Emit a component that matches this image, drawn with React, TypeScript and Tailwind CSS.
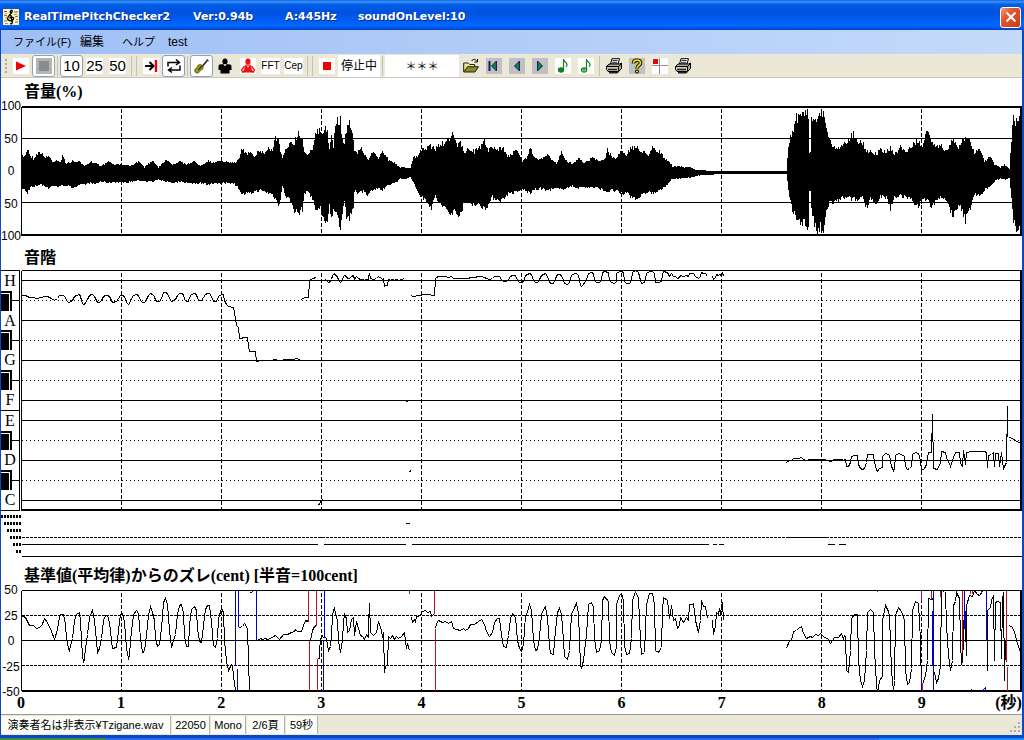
import type { ReactNode } from "react";

type Point = [number, number];

const points = (text: string): Point[] =>
  text.trim().split(/\s+/).map((pair) => pair.split(",").map(Number) as Point);

const linePath = (pts: Point[]) => "M" + pts.map(([x, y]) => `${x} ${y}`).join("L");

/* Volume envelope: time position, upper edge, lower edge. */
const ENVELOPE = `21,154,186 24,155,188 27,146,192 30,154,185 33,157,186 36,153,184 40,150,183 44,156,184 48,154,187 52,160,184
57,158,185 60,161,184 62,155,184 66,162,184 72,160,186 78,160,184 84,165,183 90,161,181 94,160,183 100,165,180 108,160,181 114,163,180
122,163,181 130,165,180 138,160,179 144,166,179 152,159,180 158,166,178 166,158,180 172,163,181 180,160,180 186,163,181 194,160,182
200,164,181 208,159,183 214,162,181 220,159,182 228,161,181 234,162,182 238,157,186 242,147,194 246,152,192 250,149,193 254,154,190
260,149,189 264,152,190 268,146,192 272,149,193 275,135,198 278,137,203 280,150,198 282,157,184 285,149,194 290,139,200 294,140,209
298,130,213 302,137,208 304,150,192 308,152,190 312,145,198 315,133,208 318,129,210 320,128,205 322,135,215 325,124,224 327,128,225
329,148,204 331,136,220 333,145,207 335,120,210 338,118,220 340,116,226 342,138,214 344,140,198 346,128,215 349,115,218 351,126,215
353,140,206 354,148,190 357,152,191 360,144,190 364,154,190 368,157,194 372,151,188 378,157,187 382,149,189 388,158,184 392,160,182
396,163,180 400,166,177 406,167,177 410,167,175 413,156,181 415,155,186 417,155,189 421,149,196 427,145,200 431,144,207 435,147,195
440,142,204 446,140,209 450,139,214 453,130,210 457,142,214 460,142,212 464,150,203 468,147,201 474,150,203 480,145,205 484,138,207
488,148,204 492,144,196 496,148,198 502,145,199 508,155,192 512,153,192 516,146,191 518,150,190 522,160,188 526,156,190 530,147,192
534,157,188 540,158,187 546,153,189 550,156,188 556,162,187 561,151,188 566,160,186 572,162,185 578,156,186 584,162,186 592,156,186
598,160,187 604,158,189 607,148,190 612,155,189 616,157,190 621,148,193 626,153,191 630,147,195 637,145,197 641,150,195 648,153,190
652,144,192 656,149,191 660,150,189 664,158,186 668,160,181 672,165,177 678,165,177 684,166,176 690,166,176 696,169,174 702,169,173
710,170,173 722,170,172 786,170,172 787,156,180 789,138,198 792,130,210 795,114,216 798,116,220 801,112,222 804,109,222 806,107,226
808,114,228 809,150,189 810,150,189 811,116,210 814,118,224 817,112,235 820,110,226 822,108,234 824,114,228 826,124,210 829,138,201
834,146,202 842,145,197 848,137,197 853,131,198 858,139,199 862,140,195 866,150,207 870,150,196 876,152,205 880,148,196 886,150,197
890,146,208 894,153,196 900,145,194 906,150,197 912,143,198 918,139,208 922,144,198 927,129,198 931,140,208 936,144,198 941,142,196
946,150,201 953,135,215 958,146,206 961,139,208 965,137,220 970,138,206 974,152,192 980,147,196 984,160,188 990,155,185 994,163,180
1000,166,176 1004,163,178 1009,168,176 1011,138,195 1013,116,220 1016,118,228 1021,118,225`;

function waveformPath(): string {
  const knots = ENVELOPE.trim().split(/\s+/).map((k) => k.split(",").map(Number));
  let seed = 7;
  const random = () => {
    seed = (seed * 16807) % 2147483647;
    return seed / 2147483647;
  };
  let d = "";
  let k = 0;
  for (let x = 21; x <= 1021; x++) {
    while (k < knots.length - 2 && knots[k + 1][0] < x) k++;
    const [x0, t0, b0] = knots[k];
    const [x1, t1, b1] = knots[k + 1];
    const f = (x - x0) / (x1 - x0);
    const up = (171 - (t0 + (t1 - t0) * f)) * (1.06 - random() * 0.2);
    const down = (b0 + (b1 - b0) * f - 171) * (1.05 - random() * 0.17);
    d += `M${x} ${Math.max(107, Math.round(171 - up))}V${Math.min(235, Math.round(171 + down) + 1)}`;
  }
  return d;
}

const CENT = {
  a: points(`21,615 25,617 29,625 33,625 36,628 41,626 44,618 47,622 51,631 54,639 57,629 59,616 60,614 63,614 65,624 66,638 68,648 69,651
70,645 72,638 74,620 76,614 79,612 80,620 81,640 82,655 83,662 84,658 85,648 87,634 89,617 91,612 92,610 93,615 94,620 96,640 97,652
99,648 101,638 103,620 105,615 107,615 109,622 111,640 112,648 116,647 118,630 120,614 122,613 124,622 126,648 128,658 129,655 130,640
133,614 136,610 138,613 140,638 142,652 144,651 146,634 148,615 150,606 152,612 154,620 155,638 157,646 159,644 161,628 163,602 165,598
167,604 169,630 171,647 173,640 175,634 177,614 179,605 181,604 183,612 184,636 186,646 188,646 189,625 191,609 194,606 196,610 197,628
199,641 201,642 203,625 205,609 207,605 209,605 211,622 213,645 215,647 217,638 218,618 221,608 223,612 224,640 226,661 228,670 231,664
232,665 233,676 235,690`),
  b: points("239,627 242,626 244,623 247,628 248,660 249,690"),
  c: points("257,640 260,638 262,639 265,638 267,639 270,638 275,635 279,639 283,634 287,634 291,632 294,631 295,629 297,631 301,631 303,625 305,620 307,621 308,618 309,619"),
  d: points("310,640 312,630 314,626 316,625"),
  e: points("318,659 319,657 319,650 320,640 321,635 322,635 323,638"),
  f: points(`325,637 326,638 327,645 328,650 330,646 331,636 332,614 334,607 335,614 337,620 338,640 340,652 342,640 343,622 344,614 346,618
347,632 349,630 351,619 353,617 354,635 356,621 358,628 360,635 362,636 364,639 366,634 368,637 368,625 369,603 370,632 373,635 376,632
378,621 381,630 382,637 383,632 384,672 385,666 387,664 388,636 390,638 392,635 394,639 396,636 398,638 401,636 404,632 406,648 407,643 409,650`),
  g: points("411,617 412,622 414,619 415,622 416,616 418,616 420,614 422,611 425,610 427,612 430,611 431,616 434,613"),
  h: points(`435,628 436,623 438,620 442,622 445,621 448,623 451,621 453,628 456,629 460,630 463,628 465,630 468,628 470,624 474,624 478,621 481,619
484,624 486,631 489,636 492,632 494,622 497,618 499,618 501,635 503,646 506,647 508,635 510,618 512,613 515,617 517,640 519,648 521,651
523,644 525,615 527,612 529,604 531,610 533,640 535,650 537,649 539,636 541,614 543,609 545,606 547,618 549,645 550,653 553,654 555,630
557,612 559,608 561,614 563,640 564,656 567,659 569,650 571,614 574,607 576,603 578,613 579,640 580,664 581,668 583,660 586,634 588,604
591,602 593,607 594,638 596,652 599,650 601,640 602,600 604,596 608,601 609,640 611,652 614,655 616,646 616,604 619,595 621,593 623,600
624,645 626,654 629,653 631,638 632,600 635,591 638,598 640,640 641,654 644,652 646,604 649,593 652,593 654,604 655,650 658,652 661,647
662,610 663,597 667,600 669,618 671,605 673,620 675,618 677,628 679,625 680,617 683,622 686,617 688,620 689,604 692,604 693,603 695,620
698,632 700,620 701,600 703,606 705,606 707,618`),
  i: points("712,620 713,634 715,625 716,612 718,614 719,608 720,614 721,605 722,602 723,620"),
  j: points(`786,648 789,640 791,640 793,631 796,630 798,628 801,626 803,633 806,638 810,636 812,637 815,634 818,635 820,633 824,637 827,638 830,643
834,637 838,637 841,633 843,639 844,635 845,636 846,670 848,672 850,650 851,618 854,614 857,614 858,660 860,680 862,686 864,680 866,650
867,612 870,609 873,612 874,650 876,684 877,693 879,680 882,676 882,620 885,605 888,611 889,616 891,670 893,691 894,680 895,615 898,607
901,611 904,620 905,670 907,684 909,682 911,668 912,610 915,601 918,603 920,640 921,688`),
  k: points("922,684 925,675 927,660 928,598 931,599 933,598"),
  l: points("934,672 936,682 938,678 940,665 941,591"),
  m: points("945,592 946,625 948,655 950,670 952,660 953,605 955,601 956,592 959,598 960,640 961,664 962,660 963,640 964,600 966,655 966,605 969,595 972,596 974,590 977,594 979,595 982,591"),
  n: points("987,670 987,610 990,607 991,600 993,595 994,660 995,602 997,601 1000,602 1001,658 1002,600 1003,592 1004,680 1005,640 1006,662"),
  o: points("1009,625 1012,627 1014,632 1017,643 1021,655"),
};

/* One semitone is 100 cents: 100 px in the deviation chart, 20 px on the scale. */
const onScale = (pts: Point[], row: number): Point[] =>
  pts.map(([x, y]) => [x, Math.round(row + (y - 640) / 5)]);

const PITCH: Point[][] = [
  onScale(CENT.a.filter(([x]) => x < 230), 300),
  points("228,306 233,307 235,318 236,325 238,327 239,338 241,338 243,337 247,337 248,346 249,351 255,351 256,361 258,361"),
  points("272,359 276,359"),
  points("282,359 294,359 295,358 300,359"),
  points("301,299 304,297 308,297 309,280 312,278 316,277"),
  points("317,504 319,504 320,501 322,499"),
  onScale(CENT.f.filter(([x]) => x < 405), 280),
  points("405,400 408,402"),
  points("409,471 411,470"),
  [...onScale(CENT.g, 300), ...onScale(CENT.h, 280)],
  onScale(CENT.i, 280),
  [...onScale(CENT.j, 460), ...points(`924,468 926,464 928,452 931,452 932,414 933,468 937,469 940,462 941,451 945,452 946,457 950,466 953,457 955,452
959,452 960,463 962,466 963,450 965,464 966,452 972,451 984,451 986,452 987,467 988,455 991,454 993,452 994,466 995,453 998,453 999,466
1001,452 1003,468 1006,462 1007,406 1007,436`)],
  points("1009,437 1012,438 1016,441 1021,443"),
];

const SECONDS = [1, 2, 3, 4, 5, 6, 7, 8, 9];

function Grid({ top, bottom }: { top: number; bottom: number }) {
  return (
    <path
      d={SECONDS.map((s) => `M${21 + s * 100} ${top}V${bottom}`).join("")}
      strokeDasharray="4 2"
    />
  );
}

function Plot({ top, height, label, children }: { top: number; height: string; label: string; children: ReactNode }) {
  const size = Number(height.replace(/\D/g, ""));
  return (
    <svg
      role="img"
      aria-label={label}
      viewBox={`21 ${top} 1001 ${size}`}
      preserveAspectRatio="none"
      shapeRendering="crispEdges"
      className={`block w-full min-w-0 flex-1 ${height}`}
    >
      <g transform="translate(0.5 0.5)" fill="none" stroke="#000">
        {children}
      </g>
    </svg>
  );
}

function Axis({ values }: { values: string[] }) {
  return (
    <div className="-my-2 flex w-5 shrink-0 flex-col items-center justify-between text-[12px] leading-4">
      {values.map((v, i) => (
        <span key={i}>{v}</span>
      ))}
    </div>
  );
}

function Heading({ children }: { children: ReactNode }) {
  return (
    <h2 className="flex h-7 items-center pl-[23px] font-['Liberation_Serif','Noto_Sans_CJK_JP',serif] text-[16px] leading-6 font-bold whitespace-pre">
      {children}
    </h2>
  );
}

function Keyboard() {
  const rows = ["H", "", "A", "", "G", "", "F", "E", "", "D", "", "C"];
  return (
    <div className="flex h-[241px] w-5 shrink-0 pr-px">
      <div className="flex w-full flex-col border-y border-r border-black">
        {rows.map((name, i) =>
          name ? (
            <div
              key={i}
              className={`flex min-h-0 flex-1 items-center justify-center font-['Liberation_Serif',serif] text-[16px] leading-4 ${name === "E" ? "border-t border-black" : ""}`}
            >
              {name}
            </div>
          ) : (
            <div key={i} className="flex min-h-0 flex-1 items-center">
              <span className="flex h-full w-[11px] border-t-2 border-r-2 border-black pt-px">
                <span className="w-2 bg-black" />
              </span>
              <span className="h-px flex-1 bg-black" />
            </div>
          ),
        )}
      </div>
    </div>
  );
}

function LevelMarks() {
  return (
    <div className="flex w-5 shrink-0 flex-col items-end gap-1 pt-1" aria-hidden="true">
      {[7, 6, 5, 4, 3, 2].map((n) => (
        <div key={n} className="flex gap-px">
          {Array.from({ length: n }, (_, i) => (
            <span key={i} className="h-[3px] w-[2px] bg-black" />
          ))}
        </div>
      ))}
    </div>
  );
}

function Tool({ label, on, children }: { label: string; on?: boolean; children: ReactNode }) {
  return (
    <button
      type="button"
      aria-label={label}
      aria-pressed={on ? true : undefined}
      className={`flex h-[22px] w-[23px] shrink-0 items-center justify-center rounded-[3px] ${on ? "border border-[#8ba3bd] bg-white" : ""}`}
    >
      {children}
    </button>
  );
}

function Icon({ bg, children }: { bg?: string; children: ReactNode }) {
  return (
    <svg viewBox="0 0 16 16" className="size-4" aria-hidden="true">
      {bg && <rect width="16" height="16" fill={bg} />}
      {children}
    </svg>
  );
}

function Word({ children }: { children: ReactNode }) {
  return (
    <span className="bg-white text-[15px] leading-4">{children}</span>
  );
}

function SmallWord({ children }: { children: ReactNode }) {
  return (
    <span className="bg-white text-[10px] leading-4">{children}</span>
  );
}

const Separator = () => <span className="mx-[2px] h-5 w-px shrink-0 bg-[#c5c2b2]" />;

const Printer = () => (
  <Icon>
    <path d="M4.5 6L6 .7h7.5L12 6z" fill="#fff" stroke="#000" />
    <path d="M6.5 2.5h5M6 4.3h5" stroke="#000" strokeWidth=".8" />
    <path d="M.5 8.5L3 6h10.5l2-1v5.5l-3 3z" fill="#a8a8a0" stroke="#000" />
    <path d="M.5 8.5h12v5H2l-1.5-2zM12.5 8.5l3-3" fill="#c8c8c0" stroke="#000" />
    <path d="M2 11.5h9M3 14.8h8l2-1.8" stroke="#222" fill="none" strokeWidth="1.4" />
    <path d="M9 10h2" stroke="#d8d000" />
  </Icon>
);

const Violin = () => (
  <Icon>
    <path d="M13.800 1.800L8.200 8.500" stroke="#222" strokeWidth="1.600" />
    <path d="M12.500 .8l2.500 2.500" stroke="#555" />
    <path d="M1.500 14.500C.2 12.800.5 11 2.200 10.200c1.200-.5.6-2 2-3.200 1.600-1.200 3.200-.4 4.200.8s1.200 2.600-.2 3.800c-1.200.9-1.600.4-2.400 1.800s-2.800 2.400-4.300 1.100z" fill="#9a9818" stroke="#55540a" strokeWidth=".8" />
    <path d="M4.500 11.800l3.500-4" stroke="#222" strokeWidth="1.200" />
  </Icon>
);

const Person = ({ color, open }: { color: string; open?: boolean }) => (
  <Icon bg={open ? "#fff" : undefined}>
    <ellipse cx="8" cy="3.500" rx="2.600" ry="3" fill={color} />
    {open ? (
      <>
        <path d="M5.500 6.500h5l1.500 5.200 2 2.800H2l2-2.800z" fill={color} />
        <path d="M4.500 8L1.500 12l1.700 2.800M11.500 8l3 4-1.700 2.800" fill="none" stroke={color} strokeWidth="1.300" />
        <path d="M7 7.500L8 9l1-1.500" stroke="#fff" fill="none" />
      </>
    ) : (
      <>
        <path d="M1.500 8.500C1.500 7 2.500 6.300 4 6.300h8c1.500 0 2.500.7 2.500 2.200V12h-2v3.500h-9V12h-2z" fill={color} />
        <path d="M6.500 6.300h3L8 8.500z" fill="#fff" />
      </>
    )}
  </Icon>
);

const Note = ({ open }: { open?: boolean }) => (
  <Icon bg="#fff">
    <path d="M8.500 1v11M8.500 1.500c.5 2.500 3.500 2.500 3.500 5 0 1-.5 1.800-1 2.300" fill="none" stroke="#108020" strokeWidth="1.200" />
    <ellipse cx="6" cy="12" rx="2.600" ry="2.200" fill={open ? "#fff" : "#108020"} stroke="#108020" strokeWidth="1.200" />
    {open && <path d="M4.500 12h3M6 10.500v3" stroke="#108020" />}
  </Icon>
);

export default function App() {
  return (
    <div className="flex min-h-screen flex-col bg-white font-['Liberation_Sans','Noto_Sans_CJK_JP',sans-serif] text-black">
      <header className="flex h-[30px] items-center bg-[linear-gradient(#1260d8_0,#3a94ff_6%,#0060e8_14%,#0050dc_40%,#0060f8_72%,#0068ff_86%,#0040c8_100%)] pr-[3px] pl-[3px]">
        <svg viewBox="0 0 16 16" className="mt-1 size-4 shrink-0" aria-hidden="true">
          <rect width="16" height="16" fill="#fbf8c8" />
          <path d="M1 2.500h3M11 3h4M1 6l3 1M12 8l3-1M1 12h3M12 13h3" stroke="#e03018" strokeWidth="1" />
          <path d="M2 4l2 1M11 5.500h3M2 9h2M13 10.500h2M2 14.500h3" stroke="#40b040" strokeWidth=".8" />
          <path d="M7 14.500c1.500.8 2.500 0 2.200-1.500L7.300 3c-.2-1.500 1.800-2.600 2-.9.2 2.400-4.800 4.400-4.800 7.400 0 2.700 5.500 3 6 .4.300-2.200-3.500-2.500-3.700-.4" fill="none" stroke="#000" strokeWidth="1.400" />
        </svg>
        <h1 className="mt-1 flex flex-1 pl-[5px] font-['DejaVu_Sans','Liberation_Sans',sans-serif] text-[11px] leading-4 font-bold whitespace-nowrap text-white [text-shadow:1px_1px_0_#0a2a80]">
          <span className="w-[169px]">RealTimePitchChecker2</span>
          <span className="w-[92px]">Ver:0.94b</span>
          <span className="w-[73px]">A:445Hz</span>
          <span>soundOnLevel:10</span>
        </h1>
        <button
          type="button"
          aria-label="閉じる"
          className="mt-1 flex size-[21px] items-center justify-center rounded-[3px] border border-white bg-[linear-gradient(135deg,#f0a080,#e05830_35%,#c83c10)]"
        >
          <svg viewBox="0 0 12 12" className="size-3" aria-hidden="true">
            <path d="M1.500 1.500l9 9M10.500 1.500l-9 9" stroke="#fff" strokeWidth="2" />
          </svg>
        </button>
      </header>

      <div className="flex flex-1 flex-col border-r-2 border-l border-[#0a48c8]">
        <nav className="flex h-6 items-center bg-[linear-gradient(90deg,#9fbff5,#c4dafa)] pl-3 text-[12px] leading-4">
          <button type="button" className="w-[67px] text-left text-[11px] whitespace-nowrap">ファイル(F)</button>
          <button type="button" className="w-[42px] text-left">編集</button>
          <button type="button" className="w-[46px] text-left text-[11px]">ヘルプ</button>
          <button type="button" className="text-left">test</button>
        </nav>

        <div role="toolbar" aria-label="ツール" className="flex h-6 items-center overflow-hidden border-b border-[#cbc8b8] bg-[#ebe8d8] pl-1">
          <span className="mr-[2px] h-[14px] border-l-2 border-dotted border-[#b0ac98]" />
          <Tool label="再生"><Icon bg="#fff"><path d="M3 3.500L13 8 3 12.500z" fill="#f00000" /></Icon></Tool>
          <Tool label="停止" on><Icon bg="#b4b4b4"><rect x="3" y="3" width="10" height="10" fill="#8c8c8c" /></Icon></Tool>
          <Separator />
          <Tool label="10" on><Word>10</Word></Tool>
          <Tool label="25"><Word>25</Word></Tool>
          <Tool label="50"><Word>50</Word></Tool>
          <Separator />
          <Separator />
          <Tool label="末尾へ">
            <Icon bg="#fff">
              <path d="M2 8h8M6.500 4l4 4-4 4" fill="none" stroke="#000" strokeWidth="2" />
              <path d="M13 2v12" stroke="#f00000" strokeWidth="2.400" />
            </Icon>
          </Tool>
          <Tool label="繰り返し" on>
            <Icon>
              <path d="M2 8.500V4.500h11M10 1.500l3.500 3L10 7M14 7.500v4.500H3M6 9.500L2.500 12 6 14.500" fill="none" stroke="#000" strokeWidth="1.500" />
            </Icon>
          </Tool>
          <Separator />
          <Tool label="バイオリン" on><Violin /></Tool>
          <Tool label="男声"><Person color="#000" /></Tool>
          <Tool label="女声"><Person color="#f01010" open /></Tool>
          <Tool label="FFT"><SmallWord>FFT</SmallWord></Tool>
          <Tool label="Cep"><SmallWord>Cep</SmallWord></Tool>
          <Separator />
          <Separator />
          <Tool label="録音停止"><Icon bg="#fff"><rect x="4" y="4" width="8" height="8" fill="#f00000" /></Icon></Tool>
          <span className="flex h-[22px] w-[42px] shrink-0 items-center justify-center bg-white text-[12px] leading-4 whitespace-nowrap">停止中</span>
          <Separator />
          <span className="flex h-[22px] w-[74px] shrink-0 items-center justify-center bg-white text-[11px] leading-4">
            <span>＊</span><span>＊</span><span>＊</span>
          </span>
          <Tool label="開く">
            <Icon>
              <path d="M.7 14V5h4.500l1.500 1.500h5V9" fill="#f0e890" stroke="#222" />
              <path d="M.7 14L4.500 8.700h11L12 14z" fill="#8c8a20" stroke="#222" />
              <path d="M8.500 3c2-2.500 4-2 5 0M14.500 1v3h-3" fill="none" stroke="#000" />
            </Icon>
          </Tool>
          <Tool label="先頭へ"><Icon bg="#c0c0c4"><path d="M3.500 3v10" stroke="#102058" strokeWidth="2" /><path d="M10.500 3v10L5.500 8z" fill="#108040" stroke="#102058" /></Icon></Tool>
          <Tool label="戻る"><Icon bg="#c0c0c4"><path d="M10.500 3v10L5.500 8z" fill="#108040" stroke="#102058" /></Icon></Tool>
          <Tool label="進む"><Icon bg="#c0c0c4"><path d="M5.500 3v10l5-5z" fill="#108040" stroke="#102058" /></Icon></Tool>
          <Tool label="音符"><Note /></Tool>
          <Tool label="音符追加"><Note open /></Tool>
          <Separator />
          <Tool label="印刷"><Printer /></Tool>
          <Tool label="バージョン情報">
            <Icon bg="#c0c0c0">
              <path d="M4.500 5.500c0-4.500 7-4 7-.8C11.500 7.500 8 7.500 8 10.500" fill="none" stroke="#000" strokeWidth="3.600" />
              <circle cx="8" cy="13.500" r="2" fill="#000" />
              <path d="M4.500 5.500c0-4.500 7-4 7-.8C11.500 7.500 8 7.500 8 10.300" fill="none" stroke="#f0e000" strokeWidth="1.800" />
              <circle cx="8" cy="13.500" r="1.100" fill="#f0e000" />
            </Icon>
          </Tool>
          <Tool label="カーソル"><Icon bg="#fff"><rect x="1" y="1" width="5" height="5" fill="#f00000" /><path d="M7.500 0v16M0 7.500h16" stroke="#909090" /></Icon></Tool>
          <Tool label="印刷プレビュー"><Printer /></Tool>
        </div>

        <main className="flex-1">
          <section>
            <Heading>音量(%)</Heading>
            <div className="flex">
              <Axis values={["100", "50", "0", "50", "100"]} />
              <Plot top={106} height="h-[130px]" label="音量">
                <Grid top={108} bottom={234} />
                <path d="M21 138H1021M21 202H1021M21 106V235" />
                <path d="M21 106.500H1022M21 234.500H1022M1020.500 106V235" strokeWidth="2" />
                <path d={waveformPath()} />
              </Plot>
            </div>
          </section>

          <section className="pt-2">
            <Heading>音階</Heading>
            <div className="-mt-[2px] flex">
              <Keyboard />
              <Plot top={270} height="h-[241px]" label="音階">
                <Grid top={272} bottom={509} />
                <path d="M21 270H1021M21 280H1021M21 320H1021M21 360H1021M21 400H1021M21 420H1021M21 460H1021M21 500H1021M21 270V510" />
                <path d="M21 300H1021M21 340H1021M21 380H1021M21 440H1021M21 480H1021" strokeDasharray="1 3" />
                <path d="M21 509.500H1022M1020.500 270V510" strokeWidth="2" />
                {PITCH.map((pts, i) => (
                  <path key={i} d={linePath(pts)} />
                ))}
              </Plot>
            </div>
            <div className="flex">
              <LevelMarks />
              <Plot top={511} height="h-[51px]" label="検出レベル">
                <path d="M21 537H1021" strokeDasharray="3 1" />
                <path d="M317 537H323M786 537H826M405 523H409M21 544H317M323 544H405M411 544H708M712 544H716M718 544H723M827 544H834M838 544H845M21 556H1021" />
              </Plot>
            </div>
          </section>

          <section>
            <Heading>基準値(平均律)からのズレ(cent) [半音=100cent]</Heading>
            <div className="flex">
              <Axis values={["50", "25", "0", "-25", "-50"]} />
              <Plot top={590} height="h-[102px]" label="基準値からのズレ">
                <Grid top={592} bottom={690} />
                <path d="M21 615H1021M21 665H1021" strokeDasharray="3 1" />
                <path d="M21 590H1021M21 640H1021M21 590V690" />
                <path d="M21 690.500H1022M1020.500 590V691" strokeWidth="2" />
                {Object.entries(CENT).map(([id, pts]) => (
                  <path key={id} d={linePath(pts)} />
                ))}
                <path d="M250 592L253 591" />
                <path
                  stroke="#0000c8"
                  d="M235 590V665M237 668V690M238 590V626M256 590V640M323 640V690M324 590V637M921 674V690M932 610V665M933 590V690M943 590V591M964 590V628M965 610V628M986 590V640M942 689V690M963 689V690M971 688V690M982 690L985 687V690"
                />
                <path
                  stroke="#c01020"
                  d="M308 590V621M309 640V690M316 590V625M317 658V690M409 590V593M434 590V613M435 628V690M635 590V592M877 590V591M878 689V690M921 590V600M922 682V690M931 590V598M940 590V596M962 590V650M970 590V593M972 590V593M981 590V592M1006 590V660M1007 666V690"
                />
              </Plot>
            </div>
            <div className="flex h-[22px] items-center pl-5 font-['Liberation_Serif','Noto_Sans_CJK_JP',serif] text-[16px] leading-5 font-bold">
              {[0, ...SECONDS].map((s) => (
                <div key={s} className="flex flex-1 justify-between">
                  <span className="flex w-0 justify-center">{s}</span>
                  {s === 9 && <span>(秒)</span>}
                </div>
              ))}
            </div>
          </section>
        </main>

        <footer className="flex h-[21px] border-t border-[#9c9a8c] bg-[#ebe8d8] py-px text-[11px] leading-4 whitespace-nowrap">
          <span className="flex w-[170px] items-center justify-center border-r border-[#b8b5a4] bg-[#fcfcf8]">演奏者名は非表示¥Tzigane.wav</span>
          <span className="ml-px flex w-[38px] items-center justify-center border-r border-[#b8b5a4] bg-[#fcfcf8]">22050</span>
          <span className="ml-px flex w-[35px] items-center justify-center border-r border-[#b8b5a4] bg-[#fcfcf8]">Mono</span>
          <span className="ml-px flex w-[38px] items-center justify-center border-r border-[#b8b5a4] bg-[#fcfcf8]">2/6頁</span>
          <span className="ml-px flex w-[32px] items-center justify-center border-r border-[#b8b5a4] bg-[#fcfcf8]">59秒</span>
          <svg viewBox="0 0 12 12" className="mt-auto mr-px mb-px ml-auto size-3" aria-hidden="true">
            <path d="M9 1h2v2H9zM5 5h2v2H5zM9 5h2v2H9zM1 9h2v2H1zM5 9h2v2H5zM9 9h2v2H9z" fill="#b0ad9c" />
          </svg>
        </footer>
      </div>

      <div className="h-[3px] bg-[#0848d0]" />
      <div className="flex h-[2px]">
        <span className="w-[106px] bg-[#3c8c3c]" />
        <span className="flex-1 bg-[#2868e8]" />
        <span className="w-[145px] bg-[#1090f0]" />
      </div>
    </div>
  );
}
